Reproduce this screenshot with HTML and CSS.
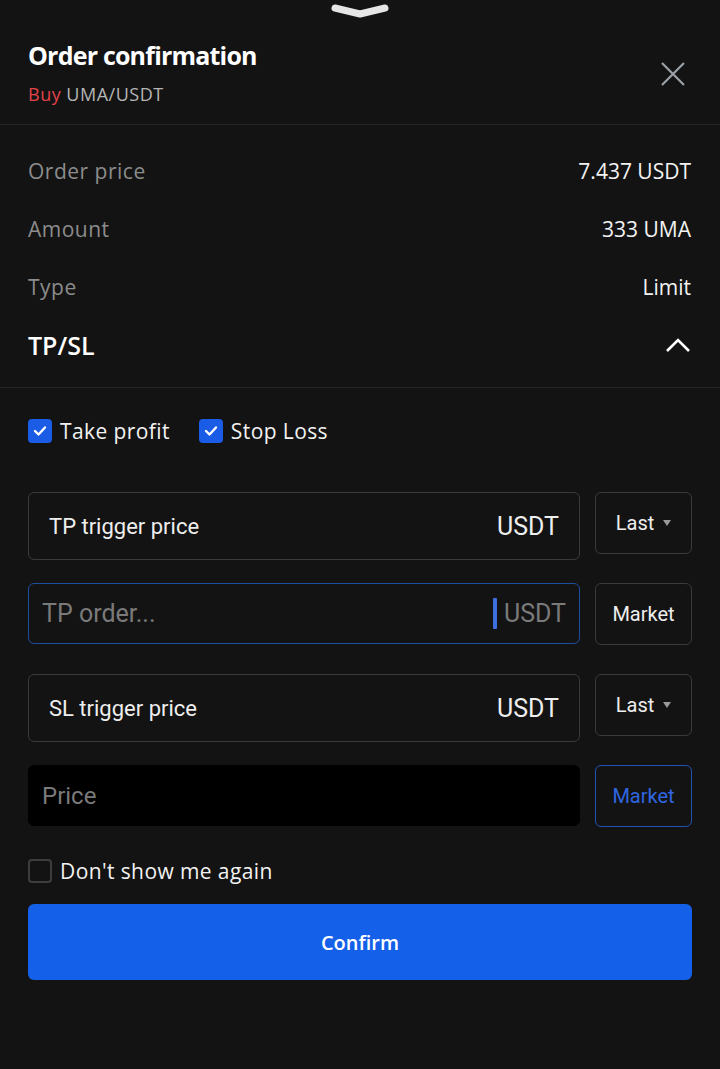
FILE: index.html
```html
<!DOCTYPE html>
<html lang="en">
<head>
    <meta charset="UTF-8">
    <meta name="viewport" content="width=device-width, initial-scale=1.0">
    <title>Order confirmation</title>
    <link rel="stylesheet" href="styles.css">
</head>
<body>
    <div class="sheet">
        <div class="handle">
            <svg width="60" height="18" viewBox="0 0 60 18"><path d="M5 6 L30 12 L55 6" stroke="#e6e6e6" stroke-width="7" fill="none" stroke-linecap="round" stroke-linejoin="round"/></svg>
        </div>

        <div class="header">
            <div>
                <h1 class="title">Order confirmation</h1>
                <div class="pair"><span class="buy">Buy</span> UMA/USDT</div>
            </div>
            <svg class="close" width="26" height="26" viewBox="0 0 26 26"><path d="M2 2 L24 24 M24 2 L2 24" stroke="#9aa0a6" stroke-width="2.2" fill="none"/></svg>
        </div>

        <div class="details">
            <div class="row"><span class="label">Order price</span><span class="value">7.437 USDT</span></div>
            <div class="row"><span class="label">Amount</span><span class="value">333 UMA</span></div>
            <div class="row"><span class="label">Type</span><span class="value">Limit</span></div>
            <div class="row section">
                <span class="section-title">TP/SL</span>
                <svg width="26" height="16" viewBox="0 0 26 16"><path d="M2 14 L13 3 L24 14" stroke="#fff" stroke-width="2.6" fill="none"/></svg>
            </div>
        </div>

        <div class="tpsl">
            <div class="checks">
                <label class="check"><span class="box on"><svg width="14" height="12" viewBox="0 0 14 12"><path d="M2 6 L5.5 9.5 L12 2.5" stroke="#fff" stroke-width="2.4" fill="none" stroke-linecap="round" stroke-linejoin="round"/></svg></span>Take profit</label>
                <label class="check"><span class="box on"><svg width="14" height="12" viewBox="0 0 14 12"><path d="M2 6 L5.5 9.5 L12 2.5" stroke="#fff" stroke-width="2.4" fill="none" stroke-linecap="round" stroke-linejoin="round"/></svg></span>Stop Loss</label>
            </div>

            <div class="line">
                <div class="field tall"><span class="text">TP trigger price</span><span class="unit">USDT</span></div>
                <div class="pick">Last <span class="tri"></span></div>
            </div>
            <div class="line">
                <div class="field focus"><span class="hint">TP order...</span><span class="caret"></span><span class="unit dim">USDT</span></div>
                <div class="pick">Market</div>
            </div>
            <div class="line">
                <div class="field tall"><span class="text">SL trigger price</span><span class="unit">USDT</span></div>
                <div class="pick">Last <span class="tri"></span></div>
            </div>
            <div class="line">
                <div class="field black"><span class="hint small">Price</span></div>
                <div class="pick active">Market</div>
            </div>

            <label class="check again"><span class="box"></span>Don't show me again</label>

            <button class="confirm">Confirm</button>
        </div>
    </div>
</body>
</html>
```

FILE: styles.css
```css
* { box-sizing: border-box; }
body { margin: 0; background: #121212; color: #fff; font-family: "Open Sans", "Noto Sans", sans-serif; }
.sheet { width: 720px; height: 1069px; background: #131313; }
.handle { display: flex; justify-content: center; height: 22px; padding-top: 2px; }

.header { display: flex; justify-content: space-between; align-items: center; padding: 17px 34px 19px 28px; border-bottom: 1px solid #262626; }
.title { margin: 0; font-size: 25px; font-weight: 700; line-height: 32px; letter-spacing: -0.8px; }
.pair { margin-top: 12px; font-size: 18px; color: #b5b5b5; line-height: 22px; letter-spacing: 0.5px; }
.buy { color: #e2434b; }
.close { margin-top: 4px; }

.details { padding: 17px 29px 13px 28px; border-bottom: 1px solid #262626; }
.row { display: flex; justify-content: space-between; align-items: center; height: 58px; font-size: 21px; }
.label { color: #8c8c8c; letter-spacing: 0.5px; }
.value { color: #f2f2f2; }
.section-title { font-size: 25px; font-weight: 600; }

.tpsl { padding: 17px 28px 0 28px; }
.checks { display: flex; gap: 29px; height: 52px; align-items: center; margin-bottom: 35px; }
.check { display: flex; align-items: center; gap: 8px; font-size: 21px; color: #f2f2f2; letter-spacing: 0.4px; }
.box { width: 24px; height: 24px; border: 2px solid #3a3a3a; border-radius: 4px; display: flex; align-items: center; justify-content: center; }
.box.on { background: #1a5ce6; border-color: #1a5ce6; }

.line { display: flex; gap: 15px; height: 68px; margin-bottom: 23px; align-items: flex-start; }
.field { flex: 1; height: 61px; border: 1px solid #3a3a3a; border-radius: 6px; display: flex; align-items: center; padding: 0 13px; font-family: Roboto, sans-serif; font-size: 25px; }
.field.tall { height: 68px; padding: 0 20px; }
.field.focus { border-color: #1f4d9e; }
.field.black { background: #000; border-color: #000; }
.text { flex: 1; color: #eee; font-size: 22px; }
.hint { flex: 1; color: #7a7a7a; }
.hint.small { font-size: 24px; }
.unit { color: #eee; font-size: 25px; }
.unit.dim { color: #7a7a7a; }
.caret { width: 4px; height: 31px; background: #3d6fe0; margin-right: 7px; border-radius: 1px; }

.pick { width: 97px; height: 62px; border: 1px solid #3a3a3a; border-radius: 6px; display: flex; align-items: center; justify-content: center; gap: 9px; font-family: Roboto, sans-serif; font-size: 20px; color: #eee; }
.pick.active { border-color: #2452b4; color: #2f66e0; }
.tri { width: 0; height: 0; border-left: 4px solid transparent; border-right: 4px solid transparent; border-top: 6px solid #999; }

.again { height: 30px; }
.again .box { border-color: #3d3d3d; }
.confirm { display: block; width: 100%; height: 76px; margin-top: 18px; background: #1460e8; border: none; border-radius: 6px; color: #fff; font-family: "Open Sans", sans-serif; font-size: 20px; font-weight: 600; }
```
